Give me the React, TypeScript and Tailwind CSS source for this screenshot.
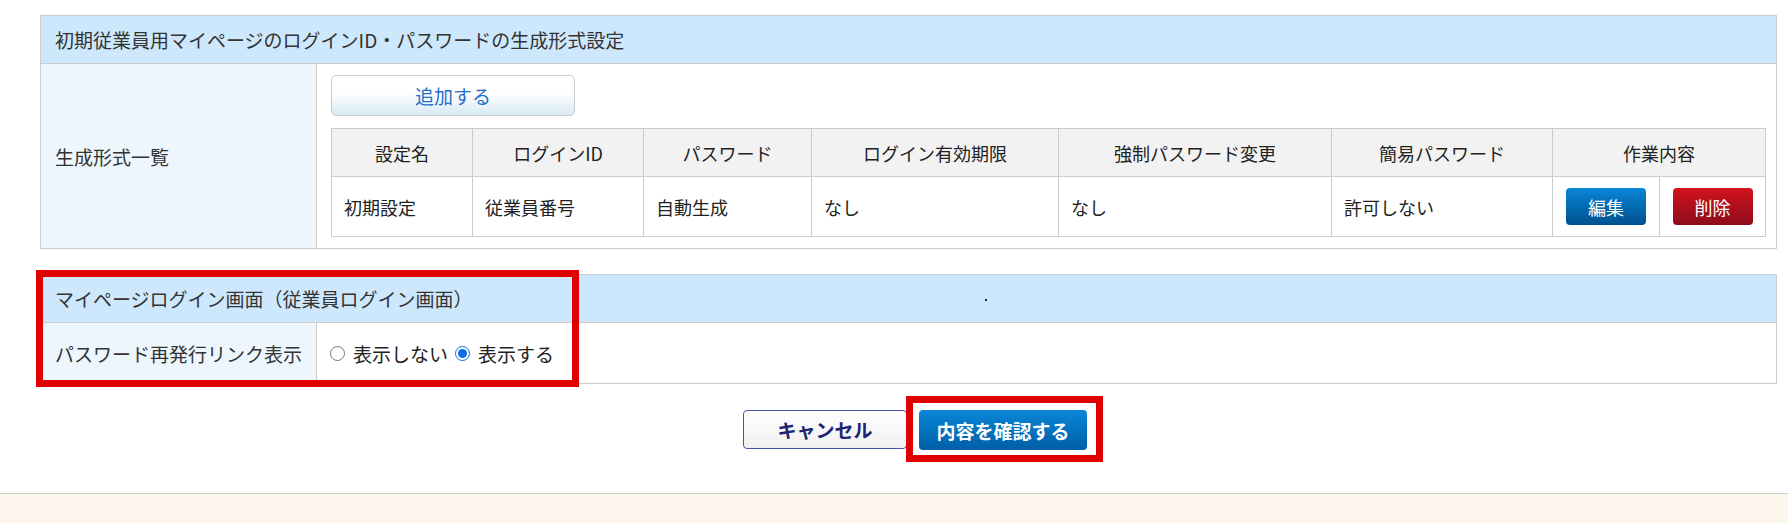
import React from "react";

const font = { fontFamily: '"Noto Sans CJK JP", "Noto Sans", sans-serif' };

export default function App() {
  return (
    <div
      className="w-full h-[523px] bg-white flex flex-col text-[#333] text-[19px] leading-none"
      style={font}
    >
      <div className="flex-1 pl-[40px] pr-[11px] pt-[15px]">
        {/* Box 1 */}
        <div className="border border-[#cccccc]">
          <div className="h-[48px] bg-[#cde8fc] border-b border-[#cccccc] px-[14px] flex items-center">
            初期従業員用マイページのログインID・パスワードの生成形式設定
          </div>
          <div className="flex">
            <div className="w-[276px] shrink-0 bg-[#edf5fd] border-r border-[#cccccc] px-[14px] flex items-center">
              生成形式一覧
            </div>
            <div className="flex-1 pl-[14px] pr-[12px] pt-[11px] pb-[11px]">
              <button className="w-[244px] h-[41px] rounded-[5px] border border-[#cccccc] bg-gradient-to-b from-white from-45% to-[#d6eaf3] text-[#1f6fcb] text-[19px] flex items-center justify-center">
                追加する
              </button>
              <table className="mt-[12px] w-[1434px] table-fixed border-collapse text-[#222] text-[18px]">
                <colgroup>
                  <col className="w-[141px]" />
                  <col className="w-[171px]" />
                  <col className="w-[168px]" />
                  <col className="w-[247px]" />
                  <col className="w-[273px]" />
                  <col className="w-[221px]" />
                  <col className="w-[107px]" />
                  <col className="w-[106px]" />
                </colgroup>
                <thead>
                  <tr className="h-[48px] bg-[#f2f2f2]">
                    <th className="border border-[#cccccc] font-normal text-center">設定名</th>
                    <th className="border border-[#cccccc] font-normal text-center">ログインID</th>
                    <th className="border border-[#cccccc] font-normal text-center">パスワード</th>
                    <th className="border border-[#cccccc] font-normal text-center">ログイン有効期限</th>
                    <th className="border border-[#cccccc] font-normal text-center">強制パスワード変更</th>
                    <th className="border border-[#cccccc] font-normal text-center">簡易パスワード</th>
                    <th colSpan={2} className="border border-[#cccccc] font-normal text-center">
                      作業内容
                    </th>
                  </tr>
                </thead>
                <tbody>
                  <tr className="h-[60px]">
                    <td className="border border-[#cccccc] px-[12px]">初期設定</td>
                    <td className="border border-[#cccccc] px-[12px]">従業員番号</td>
                    <td className="border border-[#cccccc] px-[12px]">自動生成</td>
                    <td className="border border-[#cccccc] px-[12px]">なし</td>
                    <td className="border border-[#cccccc] px-[12px]">なし</td>
                    <td className="border border-[#cccccc] px-[12px]">許可しない</td>
                    <td className="border border-[#cccccc]">
                      <div className="flex justify-center">
                        <button className="w-[80px] h-[37px] rounded-[4px] bg-gradient-to-b from-[#0a86d8] to-[#00518e] text-white text-[18px] flex items-center justify-center">
                          編集
                        </button>
                      </div>
                    </td>
                    <td className="border border-[#cccccc]">
                      <div className="flex justify-center">
                        <button className="w-[80px] h-[37px] rounded-[4px] bg-gradient-to-b from-[#d3111f] to-[#8e0c1a] text-white text-[18px] flex items-center justify-center">
                          削除
                        </button>
                      </div>
                    </td>
                  </tr>
                </tbody>
              </table>
            </div>
          </div>
        </div>

        {/* Box 2 */}
        <div className="relative mt-[25px] border border-[#cccccc]">
          <div className="h-[48px] bg-[#cde8fc] border-b border-[#cccccc] flex items-center">
            <div className="w-[276px] shrink-0 px-[14px] whitespace-nowrap">
              マイページログイン画面（従業員ログイン画面）
            </div>
            <div className="flex-1 flex justify-start pl-[668px]">
              <span className="w-[2px] h-[2px] bg-[#222] block mt-[2px]"></span>
            </div>
          </div>
          <div className="flex h-[60px]">
            <div className="w-[276px] shrink-0 bg-[#edf5fd] border-r border-[#cccccc] px-[14px] flex items-center">
              パスワード再発行リンク表示
            </div>
            <div className="flex-1 pl-[13px] flex items-center text-[#222]">
              <label className="flex items-center">
                <input type="radio" name="reissue" className="m-0 w-[15px] h-[15px]" />
                <span className="ml-[8px]">表示しない</span>
              </label>
              <label className="flex items-center ml-[7px]">
                <input
                  type="radio"
                  name="reissue"
                  defaultChecked
                  className="m-0 w-[15px] h-[15px] accent-[#0b6fe3]"
                />
                <span className="ml-[8px]">表示する</span>
              </label>
            </div>
          </div>
          <div className="absolute -left-[5px] -top-[5px] w-[543px] -bottom-[4px] border-[7px] border-[#e00000] pointer-events-none"></div>
        </div>

        {/* Buttons */}
        <div className="mt-[26px] flex justify-center pl-[13px]">
          <button className="w-[164px] h-[39px] rounded-[4px] border border-[#4253a8] bg-gradient-to-b from-white to-[#f0f0f0] text-[#1c2473] text-[19px] font-bold flex items-center justify-center">
            キャンセル
          </button>
          <div className="relative ml-[12px]">
            <button className="w-[168px] h-[40px] rounded-[4px] bg-gradient-to-b from-[#0a86d8] to-[#005fa6] text-white text-[19px] font-bold flex items-center justify-center">
              内容を確認する
            </button>
            <div className="absolute -left-[13px] -right-[16px] -top-[14px] -bottom-[12px] border-[7px] border-[#e00000] pointer-events-none"></div>
          </div>
        </div>
      </div>
      <div className="h-[30px] border-t border-[#cccccc] bg-[#fdf6ec]"></div>
    </div>
  );
}
